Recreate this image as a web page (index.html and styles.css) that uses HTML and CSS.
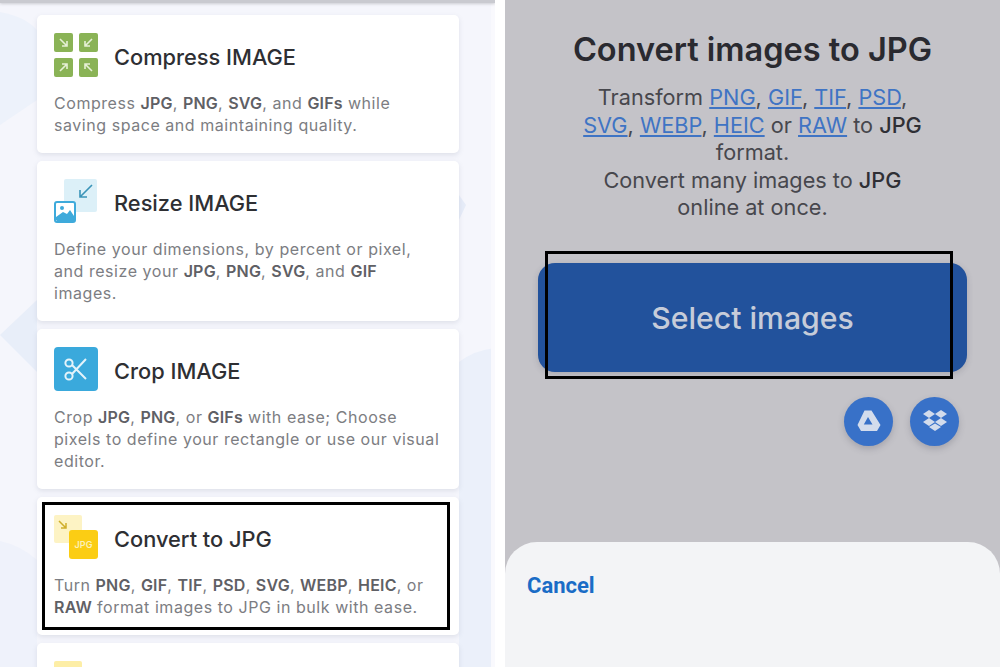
FILE: index.html
```html
<!DOCTYPE html>
<html lang="en">
<head>
  <meta charset="UTF-8" />
  <title>Convert images to JPG</title>
  <link rel="stylesheet" href="styles.css">
</head>
<body>
  <div class="shot">
    <section class="tools">
      <svg class="tools-bg" width="495" height="667" viewBox="0 0 495 667">
        <path d="M0 12 Q24 16 37 30 V100 L0 125 Z" fill="#edf2fb" />
        <path d="M37 300 L0 335 L37 372 Z" fill="#e8eef9" />
        <path d="M0 541 Q20 545 37 560 V667 H0 Z" fill="#eff2fb" />
        <path d="M459 362 Q475 350 495 348 V667 H459 Z" fill="#ebf0fa" />
        <path d="M459 195 L466 205 L459 220 Z" fill="#e6ecf8" />
        <rect x="491" y="0" width="4" height="667" fill="#f9f9fd" />
      </svg>
      <article class="card">
        <div class="card-head">
          <svg class="tool-icon" viewBox="0 0 44 44">
            <g fill="#8ab356">
              <rect x="0" y="0" width="19" height="19" rx="2" />
              <rect x="25" y="0" width="19" height="19" rx="2" />
              <rect x="0" y="25" width="19" height="19" rx="2" />
              <rect x="25" y="25" width="19" height="19" rx="2" />
            </g>
            <g fill="none" stroke="#e6f0d6" stroke-width="1.6">
              <path d="M6 6 L13 13 M13 8 V13 H8" />
              <path d="M38 6 L31 13 M31 8 V13 H36" />
              <path d="M6 38 L13 31 M8 31 H13 V36" />
              <path d="M38 38 L31 31 M36 31 H31 V36" />
            </g>
          </svg>
          <h2>Compress IMAGE</h2>
        </div>
        <p>Compress <b>JPG</b>, <b>PNG</b>, <b>SVG</b>, and <b>GIFs</b> while<br>saving space and maintaining quality.</p>
      </article>
      <article class="card">
        <div class="card-head">
          <svg class="tool-icon" viewBox="0 0 44 44">
            <rect x="10" y="0" width="33" height="33" rx="2" fill="#dcf0f8" />
            <path d="M38 6 L26 18 M26 11 V18 H33" fill="none" stroke="#3a94b8" stroke-width="1.6" />
            <rect x="1" y="23" width="20" height="20" rx="2" fill="#fff" stroke="#3eaadb" stroke-width="2" />
            <circle cx="8" cy="29" r="2" fill="#3eaadb" />
            <path d="M2 41 L2 38 L9 33 L13 35 L16 31 L20 37 V42 H3 Z" fill="#3eaadb" />
          </svg>
          <h2>Resize IMAGE</h2>
        </div>
        <p>Define your dimensions, by percent or pixel,<br>and resize your <b>JPG</b>, <b>PNG</b>, <b>SVG</b>, and <b>GIF</b><br>images.</p>
      </article>
      <article class="card">
        <div class="card-head">
          <svg class="tool-icon" viewBox="0 0 44 44">
            <rect width="44" height="44" rx="4" fill="#3aa9dc" />
            <g fill="none" stroke="#e4f3fa" stroke-width="2">
              <circle cx="15" cy="16" r="3.6" />
              <circle cx="15" cy="29" r="3.6" />
              <path d="M18 18 L32 32 M18 27 L32 12" />
            </g>
          </svg>
          <h2>Crop IMAGE</h2>
        </div>
        <p>Crop <b>JPG</b>, <b>PNG</b>, or <b>GIFs</b> with ease; Choose<br>pixels to define your rectangle or use our visual<br>editor.</p>
      </article>
      <article class="card">
        <div class="card-head">
          <svg class="tool-icon" viewBox="0 0 44 44">
            <rect x="0" y="0" width="28" height="28" rx="2" fill="#fdf3c4" />
            <path d="M5 6 L12 13 M12 8 V13 H7" fill="none" stroke="#cfae2c" stroke-width="1.5" />
            <rect x="15" y="15" width="29" height="29" rx="3" fill="#fbcd14" />
            <text x="29.5" y="33" class="jpg-mark">JPG</text>
          </svg>
          <h2>Convert to JPG</h2>
        </div>
        <p>Turn <b>PNG</b>, <b>GIF</b>, <b>TIF</b>, <b>PSD</b>, <b>SVG</b>, <b>WEBP</b>, <b>HEIC</b>, or<br><b>RAW</b> format images to JPG in bulk with ease.</p>
        <div class="mark mark-card"></div>
      </article>
      <article class="card">
        <div class="card-head">
          <svg class="tool-icon" viewBox="0 0 44 44">
            <rect width="28" height="28" rx="2" fill="#fdeea6" />
          </svg>
        </div>
      </article>
    </section>

    <section class="convert">
      <h1>Convert images to JPG</h1>
      <p class="lead">Transform <a href="#">PNG</a>, <a href="#">GIF</a>, <a href="#">TIF</a>, <a href="#">PSD</a>,<br><a href="#">SVG</a>, <a href="#">WEBP</a>, <a href="#">HEIC</a> or <a href="#">RAW</a> to <span class="dark">JPG</span><br>format.<br>Convert many images to <span class="dark">JPG</span><br>online at once.</p>
      <div class="select-btn">
        Select images
        <div class="mark mark-btn"></div>
      </div>
      <div class="cloud-row">
        <div class="cloud">
          <svg width="26" height="24" viewBox="0 0 26 24">
            <path fill="#d3dcec" fill-rule="evenodd" d="M8.5 1.5 H15.5 L24.5 16 L21 22 H5 L1.5 16 Z M12 8 L7.8 15.5 H16.5 Z" />
          </svg>
        </div>
        <div class="cloud">
          <svg width="26" height="24" viewBox="0 0 26 24">
            <g fill="#d3dcec">
              <path d="M7 1 L13 5 L7 9 L1 5 Z" />
              <path d="M19 1 L25 5 L19 9 L13 5 Z" />
              <path d="M7 9 L13 13 L7 17 L1 13 Z" />
              <path d="M19 9 L25 13 L19 17 L13 13 Z" />
              <path d="M7 18 L13 14.5 L19 18 L13 22 Z" />
            </g>
          </svg>
        </div>
      </div>
      <div class="sheet">
        <span class="cancel">Cancel</span>
      </div>
    </section>
  </div>
</body>
</html>
```

FILE: styles.css
```css
* { box-sizing: border-box; margin: 0; padding: 0; }
html, body { height: 100%; overflow: hidden; }
body {
  background: #fff;
  font-family: 'Inter', 'Liberation Sans', sans-serif;
}
.shot {
  display: flex;
  gap: 10px;
  height: 667px;
}

/* left phone: tool list */
.tools {
  position: relative;
  width: 495px;
  height: 667px;
  overflow: hidden;
  background: #f5f6fc;
  padding: 15px 36px 0 37px;
  display: flex;
  flex-direction: column;
  gap: 8px;
}
.tools::after {
  content: '';
  position: absolute;
  top: 0;
  left: 0;
  right: 0;
  height: 3px;
  background: #c9cad0;
  box-shadow: 0 1px 3px #c9cad0;
}
.tools-bg {
  position: absolute;
  top: 0;
  left: 0;
}
.card {
  position: relative;
  flex: none;
  background: #fff;
  border-radius: 5px;
  padding: 18px 17px 17px;
  box-shadow: 0 2px 5px rgba(120, 125, 150, 0.18);
}
.card-head {
  display: flex;
  align-items: center;
  gap: 16px;
  margin-bottom: 15px;
}
.tool-icon {
  width: 44px;
  height: 44px;
  flex: none;
}
.jpg-mark {
  font-size: 9px;
  font-weight: 600;
  fill: #fdf1b8;
  text-anchor: middle;
}
.card h2 {
  margin-top: 3px;
  font-size: 21.8px;
  font-weight: 500;
  color: #2e2f33;
}
.card p {
  font-size: 16px;
  line-height: 22px;
  letter-spacing: 0.55px;
  color: #7c7d82;
  white-space: nowrap;
}
.card p b {
  font-weight: 600;
  letter-spacing: 0.2px;
  color: #5f6065;
}
.mark {
  position: absolute;
  border: 3px solid #000;
}
.mark-card {
  top: 5px;
  left: 5px;
  width: 408px;
  height: 128px;
}

/* right phone: converter, dimmed by the sheet */
.convert {
  position: relative;
  width: 495px;
  height: 667px;
  overflow: hidden;
  background: #c4c3c8;
  display: flex;
  flex-direction: column;
  align-items: center;
  padding-top: 30px;
  color: #47474d;
}
.convert h1 {
  font-size: 32.5px;
  line-height: 40px;
  font-weight: 600;
  color: #2a2a30;
  margin-bottom: 14px;
}
.lead {
  font-size: 21.7px;
  line-height: 27.5px;
  text-align: center;
}
.lead a { color: #3f74c4; }
.lead .dark { color: #2f2f35; font-weight: 500; }
.select-btn {
  position: relative;
  margin-top: 41px;
  width: 429px;
  height: 109px;
  padding-top: 1px;
  background: #22529c;
  border-radius: 17px;
  color: #c6ccd9;
  font-size: 30.2px;
  font-weight: 500;
  display: flex;
  align-items: center;
  justify-content: center;
  box-shadow: 0 2px 6px rgba(60, 60, 80, 0.2);
}
.mark-btn {
  top: -12px;
  left: 7px;
  width: 408px;
  height: 128px;
}
.cloud-row {
  align-self: flex-end;
  display: flex;
  gap: 17px;
  margin: 25px 41px 0 0;
}
.cloud {
  width: 49px;
  height: 49px;
  border-radius: 50%;
  background: #3871c8;
  display: flex;
  align-items: center;
  justify-content: center;
  box-shadow: 0 3px 6px rgba(70, 70, 90, 0.25);
}
.sheet {
  margin-top: auto;
  width: 100%;
  height: 125px;
  background: #f3f4f6;
  border-radius: 32px 32px 0 0;
  padding: 31px 22px 0;
}
.cancel {
  display: block;
  font-family: 'Roboto', 'Liberation Sans', sans-serif;
  font-size: 22px;
  font-weight: 700;
  color: #1a6cc6;
}
```
